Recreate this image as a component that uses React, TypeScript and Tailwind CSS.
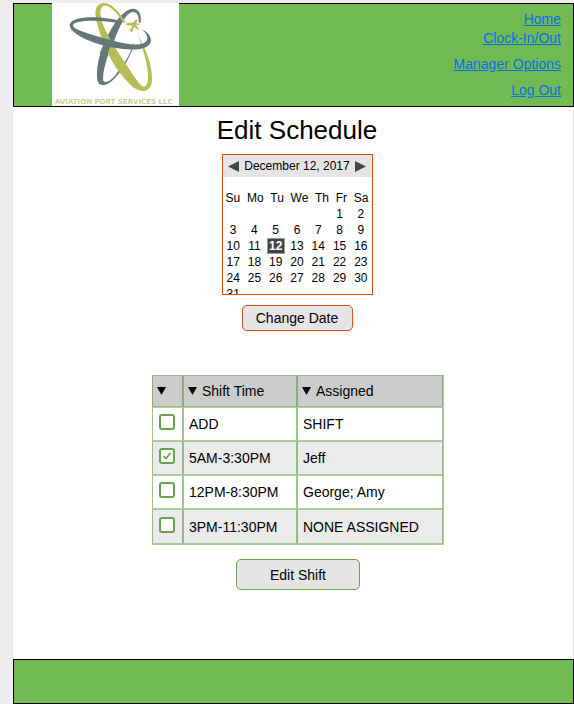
import { useState } from "react";

const weekdays = ["Su", "Mo", "Tu", "We", "Th", "Fr", "Sa"];

// December 2017 starts on a Friday
const weeks: (number | null)[][] = [
  [null, null, null, null, null, 1, 2],
  [3, 4, 5, 6, 7, 8, 9],
  [10, 11, 12, 13, 14, 15, 16],
  [17, 18, 19, 20, 21, 22, 23],
  [24, 25, 26, 27, 28, 29, 30],
  [31, null, null, null, null, null, null],
];

const shifts = [
  { time: "ADD", assigned: "SHIFT", selected: false },
  { time: "5AM-3:30PM", assigned: "Jeff", selected: true },
  { time: "12PM-8:30PM", assigned: "George; Amy", selected: false },
  { time: "3PM-11:30PM", assigned: "NONE ASSIGNED", selected: false },
];

function Logo() {
  return (
    <div className="-mt-px flex h-[103px] w-[127px] flex-col overflow-hidden bg-white">
      <svg viewBox="156 9 381 285" className="h-[95px] w-[127px] shrink-0" aria-hidden="true">
        <path
          fill="#66777a"
          d="M422 69C425 40 416 26 398 26C365 28 328 90 308 140C292 180 284 240 299 253C325 266 360 220 380 185C392 163 402 140 403 125C394 156 374 190 355 213C337 241 317 252 310 243C306 222 320 170 337 135C353 95 375 36 400 36C413 37 417 50 416 66Z"
        />
        <path
          fill="#b6bf55"
          d="M377 67C352 25 328 7 308 9C283 12 282 45 293 75C310 150 350 215 392 255C425 285 455 275 456 240C457 200 440 150 414 106C432 155 446 205 444 237C442 266 428 266 412 243C380 195 332 130 308 72C299 45 298 20 312 17C326 14 350 35 371 69Z"
        />
        <path
          fill="#66777a"
          d="M368 65C310 46 212 45 209 75C208 100 270 127 320 139C380 153 450 155 453 122C453 108 441 95 425 88C439 100 444 110 441 120C433 140 385 136 335 121C275 104 219 90 219 76C220 60 300 58 362 71Z"
        />
        <path fill="#66777a" d="M299 160L312 133L345 118L328 148L318 170Z" />
        <path
          fill="#b6bf55"
          d="M411 59C407 58 403 62 401 67L380 70L377 74L397 77L393 87L386 90L392 92L395 98L398 92L402 80L414 90L417 88L408 74L418 75L419 71L408 70C411 66 413 62 411 59Z"
        />
      </svg>
      <span className="h-2 whitespace-nowrap pl-[3px] font-['DejaVu_Sans',sans-serif] text-[7px] font-bold leading-[8px] text-[#c9cf94]">
        AVIATION PORT SERVICES LLC
      </span>
    </div>
  );
}

function SortArrow() {
  return (
    <svg viewBox="0 0 9 8" className="h-2 w-[9px]" aria-hidden="true">
      <path d="M0 0H9L4.500 8Z" fill="#000" />
    </svg>
  );
}

function Calendar() {
  const [day, setDay] = useState(12);
  return (
    <section className="h-[141px] w-[151px] overflow-hidden border border-[#d9501e] bg-white text-xs">
      <div className="flex h-[22px] items-center justify-between bg-[#e5e5e5] px-1">
        <button type="button" aria-label="Previous month" className="px-px">
          <svg viewBox="0 0 11 11" className="size-[11px]">
            <path d="M11 0V11L0 5.500Z" fill="#444" />
          </svg>
        </button>
        <span className="whitespace-nowrap">December {day}, 2017</span>
        <button type="button" aria-label="Next month" className="px-px">
          <svg viewBox="0 0 11 11" className="size-[11px]">
            <path d="M0 0V11L11 5.500Z" fill="#444" />
          </svg>
        </button>
      </div>
      <table className="mt-[13px] block leading-4">
        <thead className="block">
          <tr className="flex justify-between px-[3px]">
            {weekdays.map((name) => (
              <th key={name} className="p-0 font-normal">
                {name}
              </th>
            ))}
          </tr>
        </thead>
        <tbody className="block">
          {weeks.map((week, w) => (
            <tr key={w} className="grid h-4 grid-cols-7">
              {week.map((d, i) => (
                <td key={i} className="flex h-4 items-center justify-center p-0">
                  {d !== null && (
                    <button
                      type="button"
                      onClick={() => setDay(d)}
                      className={
                        d === day
                          ? "h-4 w-[18px] shrink-0 bg-[#444] font-bold leading-4 text-white outline -outline-offset-1 outline-[#999]"
                          : "leading-4"
                      }
                    >
                      {d}
                    </button>
                  )}
                </td>
              ))}
            </tr>
          ))}
        </tbody>
      </table>
    </section>
  );
}

function ShiftTable() {
  const border = "border-x border-y border-x-[#5f9e3f99] border-y-[#6aa84f8c]";
  const head = `${border} px-1 py-0 text-left font-normal`;
  const cell = `${border} px-[5px] py-0`;
  return (
    <table className="w-[292px] table-fixed border-separate border-spacing-0 border-b border-r border-[#a9cd95] text-sm">
      <colgroup>
        <col className="w-[31px]" />
        <col className="w-[114px]" />
        <col />
      </colgroup>
      <thead>
        <tr className="h-8 bg-[#cccccc]">
          <th className={head}>
            <button type="button" aria-label="Sort by selection" className="flex items-center">
              <SortArrow />
            </button>
          </th>
          <th className={head}>
            <button type="button" className="flex items-center gap-[5px]">
              <SortArrow />
              Shift Time
            </button>
          </th>
          <th className={head}>
            <button type="button" className="flex items-center gap-[5px]">
              <SortArrow />
              Assigned
            </button>
          </th>
        </tr>
      </thead>
      <tbody>
        {shifts.map((shift) => (
          <tr key={shift.time} className="h-[34px] last:h-[35px] odd:bg-white even:bg-[#ebebeb]">
            <td className={cell}>
              <label className="relative mb-1 ml-px block size-4">
                <input
                  type="checkbox"
                  defaultChecked={shift.selected}
                  aria-label={`Select ${shift.time}`}
                  className="peer block size-4 appearance-none rounded-[3px] border-2 border-[#6aa250] bg-white"
                />
                <svg
                  viewBox="0 0 16 16"
                  className="pointer-events-none absolute inset-0 hidden size-4 peer-checked:block"
                  aria-hidden="true"
                >
                  <path d="M4.500 8L7 10.500L11.500 5" fill="none" stroke="#6aa250" strokeWidth="1.700" />
                </svg>
              </label>
            </td>
            <td className={cell}>{shift.time}</td>
            <td className={cell}>{shift.assigned}</td>
          </tr>
        ))}
      </tbody>
    </table>
  );
}

export default function App() {
  const link = "text-[#0b6fe4] underline";
  return (
    <div className="flex min-h-screen flex-col bg-[#ededed] pl-[13px] pt-[3px] font-['Liberation_Sans',Arial,sans-serif] text-black">
      <header className="flex h-[104px] items-start justify-between border border-black bg-[#72bb53] pl-[38px] pr-3">
        <Logo />
        <nav className="flex flex-col items-end pt-1.5 text-sm leading-[19px]">
          <a href="#home" className={link}>
            Home
          </a>
          <a href="#clock" className={link}>
            Clock-In/Out
          </a>
          <a href="#manager" className={`${link} mt-[7px]`}>
            Manager Options
          </a>
          <a href="#logout" className={`${link} mt-[7px]`}>
            Log Out
          </a>
        </nav>
      </header>
      <main className="flex flex-1 flex-col items-center border-r border-[#e4e4e4] bg-white pb-6 pl-2 pt-[7px]">
        <h1 className="mb-2 text-[26px] leading-8">Edit Schedule</h1>
        <Calendar />
        <button
          type="button"
          className="mt-2.5 h-[26px] w-[111px] rounded-[5px] border border-[#d9501e] bg-[#e5e5e5] text-sm"
        >
          Change Date
        </button>
        <section className="mt-11 flex flex-col items-center pl-0.5">
          <ShiftTable />
          <button
            type="button"
            className="mt-3.5 h-[31px] w-[124px] rounded-[5px] border border-[#6aa250] bg-[#e5e5e5] text-sm"
          >
            Edit Shift
          </button>
        </section>
      </main>
      <footer className="h-[45px] border border-black bg-[#72bb53]" />
    </div>
  );
}
